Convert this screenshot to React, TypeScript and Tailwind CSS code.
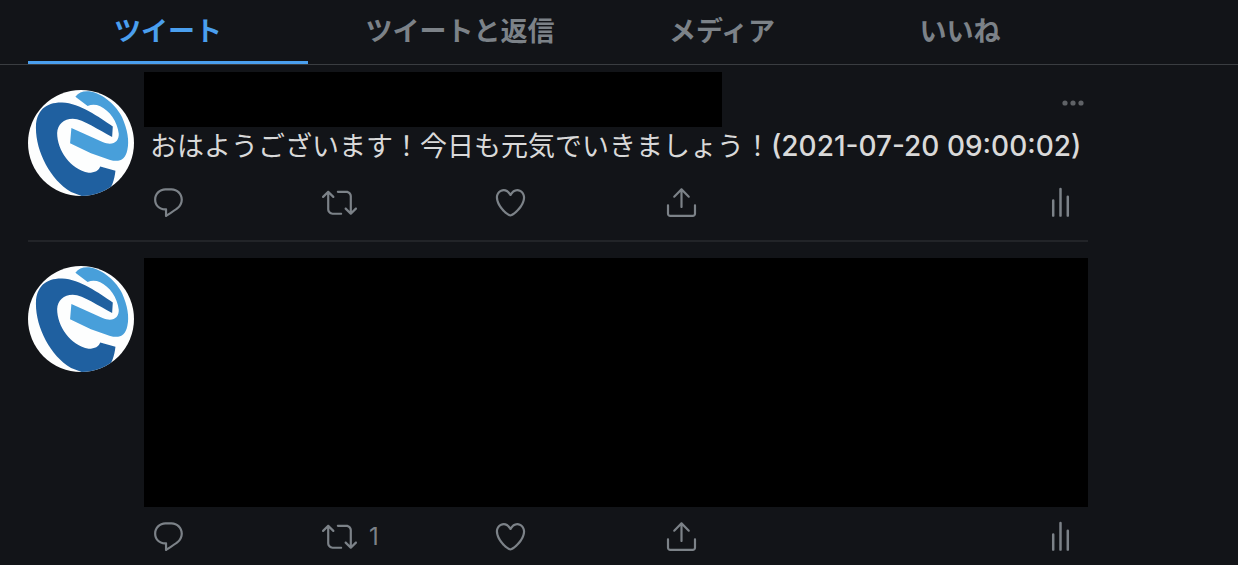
import type { ReactNode } from 'react'

const tabs = ['ツイート', 'ツイートと返信', 'メディア', 'いいね']

function Icon({ children }: { children: ReactNode }) {
  return (
    <svg viewBox="0 0 24 24" className="size-[35px] shrink-0 fill-current" aria-hidden="true">
      {children}
    </svg>
  )
}

function ReplyIcon() {
  return (
    <Icon>
      <path d="M14.046 2.242l-4.148-.01h-.002c-4.374 0-7.8 3.427-7.8 7.802 0 4.098 3.186 7.206 7.465 7.37v3.828c0 .108.044.286.12.403.142.225.384.347.632.347.138 0 .277-.038.402-.118.264-.168 6.473-4.14 8.088-5.506 1.902-1.61 3.04-3.97 3.043-6.312v-.017c-.006-4.367-3.43-7.787-7.8-7.788zm3.787 12.972c-1.134.96-4.862 3.405-6.772 4.643V16.67c0-.414-.335-.75-.75-.75h-.396c-3.66 0-6.318-2.476-6.318-5.886 0-3.534 2.768-6.302 6.3-6.302l4.147.01h.002c3.532 0 6.3 2.766 6.302 6.296-.003 1.91-.942 3.844-2.514 5.176z" />
    </Icon>
  )
}

function RetweetIcon() {
  return (
    <Icon>
      <path d="M23.77 15.67c-.292-.293-.767-.293-1.06 0l-2.22 2.22V7.65c0-2.068-1.683-3.75-3.75-3.75h-5.85c-.414 0-.75.336-.75.75s.336.75.75.75h5.85c1.24 0 2.25 1.01 2.25 2.25v10.24l-2.22-2.22c-.293-.293-.768-.293-1.06 0s-.294.768 0 1.06l3.5 3.5c.145.147.337.22.53.22s.383-.072.53-.22l3.5-3.5c.294-.292.294-.767 0-1.06zm-10.66 3.28H7.26c-1.24 0-2.25-1.01-2.25-2.25V6.46l2.22 2.22c.148.147.34.22.532.22s.384-.073.53-.22c.293-.293.293-.768 0-1.06l-3.5-3.5c-.293-.294-.768-.294-1.06 0l-3.5 3.5c-.294.292-.294.767 0 1.06s.767.293 1.06 0l2.22-2.22V16.7c0 2.068 1.683 3.75 3.75 3.75h5.85c.414 0 .75-.336.75-.75s-.337-.75-.75-.75z" />
    </Icon>
  )
}

function LikeIcon() {
  return (
    <Icon>
      <path d="M12 21.638h-.014C9.403 21.59 1.95 14.856 1.95 8.478c0-3.064 2.525-5.754 5.403-5.754 2.29 0 3.83 1.58 4.646 2.73.814-1.148 2.354-2.73 4.645-2.73 2.88 0 5.404 2.69 5.404 5.755 0 6.376-7.454 13.11-10.037 13.157H12zM7.354 4.225c-2.08 0-3.903 1.988-3.903 4.255 0 5.74 7.034 11.596 8.55 11.658 1.518-.062 8.55-5.917 8.55-11.658 0-2.267-1.823-4.255-3.903-4.255-2.528 0-3.94 2.936-3.952 2.965-.23.562-1.156.562-1.387 0-.014-.03-1.425-2.965-3.954-2.965z" />
    </Icon>
  )
}

function ShareIcon() {
  return (
    <Icon>
      <path d="M17.53 7.47l-5-5c-.293-.293-.768-.293-1.06 0l-5 5c-.294.293-.294.768 0 1.06s.767.294 1.06 0l3.72-3.72V15c0 .414.336.75.75.75s.75-.336.75-.75V4.81l3.72 3.72c.146.147.338.22.53.22s.384-.072.53-.22c.293-.293.293-.767 0-1.06z" />
      <path d="M19.708 21.944H4.292C3.028 21.944 2 20.916 2 19.652V14c0-.414.336-.75.75-.75s.75.336.75.75v5.652c0 .437.355.792.792.792h15.416c.437 0 .792-.355.792-.792V14c0-.414.336-.75.75-.75s.75.336.75.75v5.652c0 1.264-1.028 2.292-2.292 2.292z" />
    </Icon>
  )
}

function AnalyticsIcon() {
  return (
    <Icon>
      <path
        d="M7 10.6v10.4M12 2.8v18.2M17 8v13"
        fill="none"
        stroke="currentColor"
        strokeWidth="1.7"
        strokeLinecap="round"
      />
    </Icon>
  )
}

function Avatar() {
  return (
    <svg viewBox="22 30 320 320" className="size-[106px] shrink-0" role="img" aria-label="プロフィール画像">
      <clipPath id="avatar-clip">
        <circle cx="182" cy="190" r="160" />
      </clipPath>
      <g clipPath="url(#avatar-clip)">
        <rect x="22" y="30" width="320" height="320" fill="#fdfefe" />
        <path
          d="M278 140C235 112 180 70 125 68C76 67 48 92 46 140C44 212 88 300 152 338L200 356L255 345C275 328 283 302 286 274L240 261C235 273 225 280 205 280C150 270 110 212 110 160C111 134 130 117 157 117C190 118 236 152 276 172Z"
          fill="#1f60a0"
        />
        <path
          d="M153 145L247 187C278 200 297 186 296 162C292 125 268 92 240 79C228 74 215 73 202 78L165 50C175 37 190 32 207 34C250 40 290 80 306 112C323 150 328 185 322 210C316 240 298 249 270 241L212 221L149 191Z"
          fill="#489fda"
        />
      </g>
    </svg>
  )
}

function Action({ label, count, children }: { label: string; count?: number; children: ReactNode }) {
  return (
    <button type="button" aria-label={label} className="flex items-center gap-3 text-left hover:text-[#4a9fee]">
      {children}
      {count !== undefined && <span className="text-2xl leading-8">{count}</span>}
    </button>
  )
}

function TweetActions({ retweets }: { retweets?: number }) {
  return (
    <div className="flex justify-between pl-[7px] pr-[10px] text-[#7c8288]">
      <div className="grid grid-cols-[171px_171px_171px_35px]">
        <Action label="返信"><ReplyIcon /></Action>
        <Action label="リツイート" count={retweets}><RetweetIcon /></Action>
        <Action label="いいね"><LikeIcon /></Action>
        <Action label="共有"><ShareIcon /></Action>
      </div>
      <Action label="アナリティクス"><AnalyticsIcon /></Action>
    </div>
  )
}

export default function App() {
  return (
    <div className="min-h-screen bg-[#121418] font-['Inter','Noto_Sans_CJK_JP',sans-serif] text-[27px] leading-[38px] text-[#d9d9d9]">
      <nav className="border-b border-[#3a3d41] pl-7 pr-[150px]">
        <div className="grid h-16 grid-cols-[280fr_304fr_220fr_256fr]">
          {tabs.map((tab, i) => (
            <a
              key={tab}
              href="#"
              className={
                i === 0
                  ? 'flex items-center justify-center border-b-3 border-[#4a9fee] pt-[2px] font-bold text-[#4a9fee]'
                  : 'flex items-center justify-center border-b-3 border-transparent pt-[2px] font-bold text-[#7c8288]'
              }
            >
              {tab}
            </a>
          ))}
        </div>
      </nav>

      <main className="pl-7 pr-[150px]">
        <article className="flex gap-[10px] border-b-2 border-[#222428] pt-[7px] pb-5">
          <div className="pt-[18px]">
            <Avatar />
          </div>
          <div className="min-w-0 flex-1">
            {/* 名前は伏せる */}
            <div className="flex items-center justify-between pr-[3px]">
              <div className="h-[55px] w-[578px] bg-black" />
              <button type="button" aria-label="もっと見る" className="pt-[6px] text-[#5f6266]">
                <svg viewBox="0 0 24 6" className="h-[6px] w-6 fill-current" aria-hidden="true">
                  <circle cx="4" cy="3" r="2.6" />
                  <circle cx="12" cy="3" r="2.6" />
                  <circle cx="20" cy="3" r="2.6" />
                </svg>
              </button>
            </div>
            <p className="mb-[19px] pl-[6px] whitespace-nowrap">
              おはようございます！今日も元気でいきましょう！
              <span className="text-[28px] font-medium">(2021-07-20 09:00:02)</span>
            </p>
            <TweetActions />
          </div>
        </article>

        <article className="flex gap-[10px] pt-4">
          <div className="pt-2">
            <Avatar />
          </div>
          <div className="min-w-0 flex-1">
            <div className="mb-3 h-[249px] bg-black" />
            <TweetActions retweets={1} />
          </div>
        </article>
      </main>
    </div>
  )
}
